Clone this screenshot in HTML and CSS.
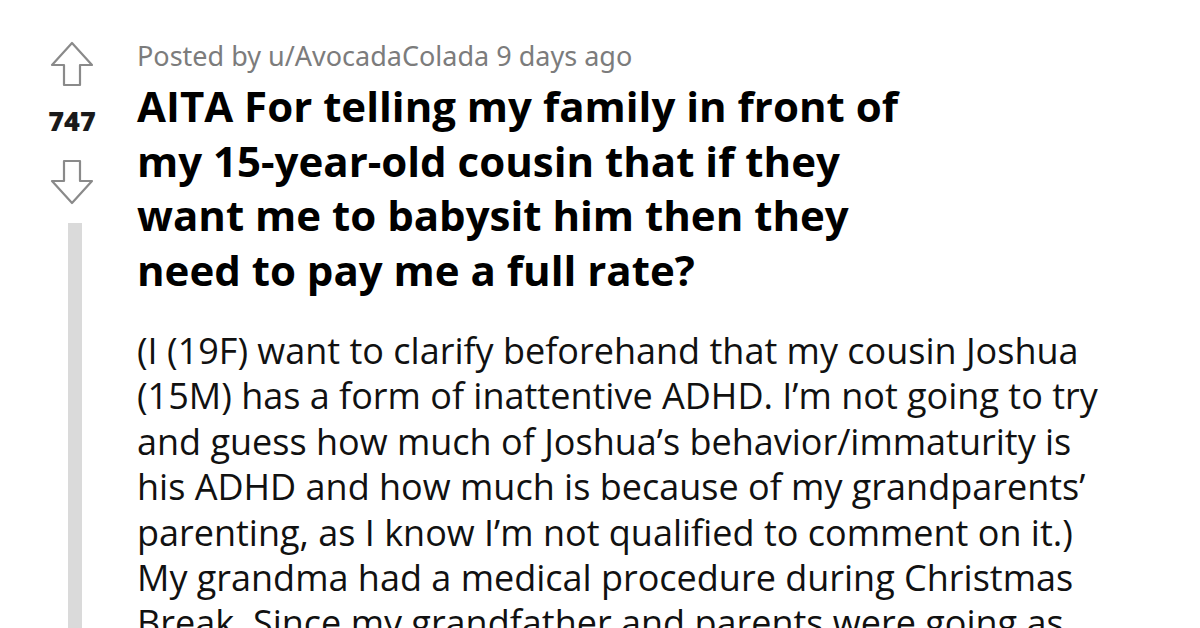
FILE: index.html
```html
<!DOCTYPE html>
<html>
<head>
<meta charset="utf-8">
<link rel="stylesheet" href="styles.css">
</head>
<body>
<div class="post">
  <div class="votes">
    <svg class="arrow" width="44" height="46" viewBox="0 0 44 46">
      <path d="M22 2 L42 24 L30 24 L30 44 L14 44 L14 24 L2 24 Z" fill="none" stroke="#8a8a8a" stroke-width="2.2" stroke-linejoin="round"/>
    </svg>
    <div class="score">747</div>
    <svg class="arrow down" width="44" height="46" viewBox="0 0 44 46">
      <path d="M22 44 L42 22 L30 22 L30 2 L14 2 L14 22 L2 22 Z" fill="none" stroke="#8a8a8a" stroke-width="2.2" stroke-linejoin="round"/>
    </svg>
    <div class="bar"></div>
  </div>
  <div class="content">
    <div class="meta">Posted by u/AvocadaColada 9 days ago</div>
    <h1 class="title">AITA For telling my family in front of<br>my 15-year-old cousin that if they<br>want me to babysit him then they<br>need to pay me a full rate?</h1>
    <p class="body-text">(I (19F) want to clarify beforehand that my cousin Joshua<br>(15M) has a form of inattentive ADHD. I’m not going to try<br>and guess how much of Joshua’s behavior/immaturity is<br>his ADHD and how much is because of my grandparents’<br>parenting, as I know I’m not qualified to comment on it.)<br>My grandma had a medical procedure during Christmas<br>Break. Since my grandfather and parents were going as</p>
  </div>
</div>
</body>
</html>
```

FILE: styles.css
```css
html, body {
  margin: 0;
  padding: 0;
  background: #ffffff;
  overflow: hidden;
}
.post {
  display: flex;
  height: 628px;
  overflow: hidden;
}
.votes {
  width: 64px;
  margin-left: 40px;
  margin-right: 33px;
  display: flex;
  flex-direction: column;
  align-items: center;
  padding-top: 41px;
  flex-shrink: 0;
}
.arrow {
  display: block;
}
.score {
  font-family: "Open Sans", sans-serif;
  font-weight: 800;
  font-size: 27px;
  line-height: 1;
  color: #1a1a1b;
  margin-top: 20px;
  margin-bottom: 25px;
}
.bar {
  width: 14px;
  flex: 1;
  margin-top: 18px;
  margin-left: 6px;
  background: #dadada;
}
.content {
  flex: 1;
  min-width: 0;
  padding-top: 38px;
}
.meta {
  font-family: "Noto Sans", sans-serif;
  font-size: 27px;
  color: #7c7c7c;
  line-height: 36px;
}
.title {
  margin: 5px 0 0 0;
  font-family: "Open Sans", sans-serif;
  font-weight: 700;
  font-size: 42px;
  line-height: 54.5px;
  color: #000;
}
.body-text {
  margin: 31px 0 0 0;
  font-family: "Open Sans", sans-serif;
  font-weight: 400;
  font-size: 36px;
  line-height: 45.4px;
  color: #111;
  white-space: nowrap;
}
```
